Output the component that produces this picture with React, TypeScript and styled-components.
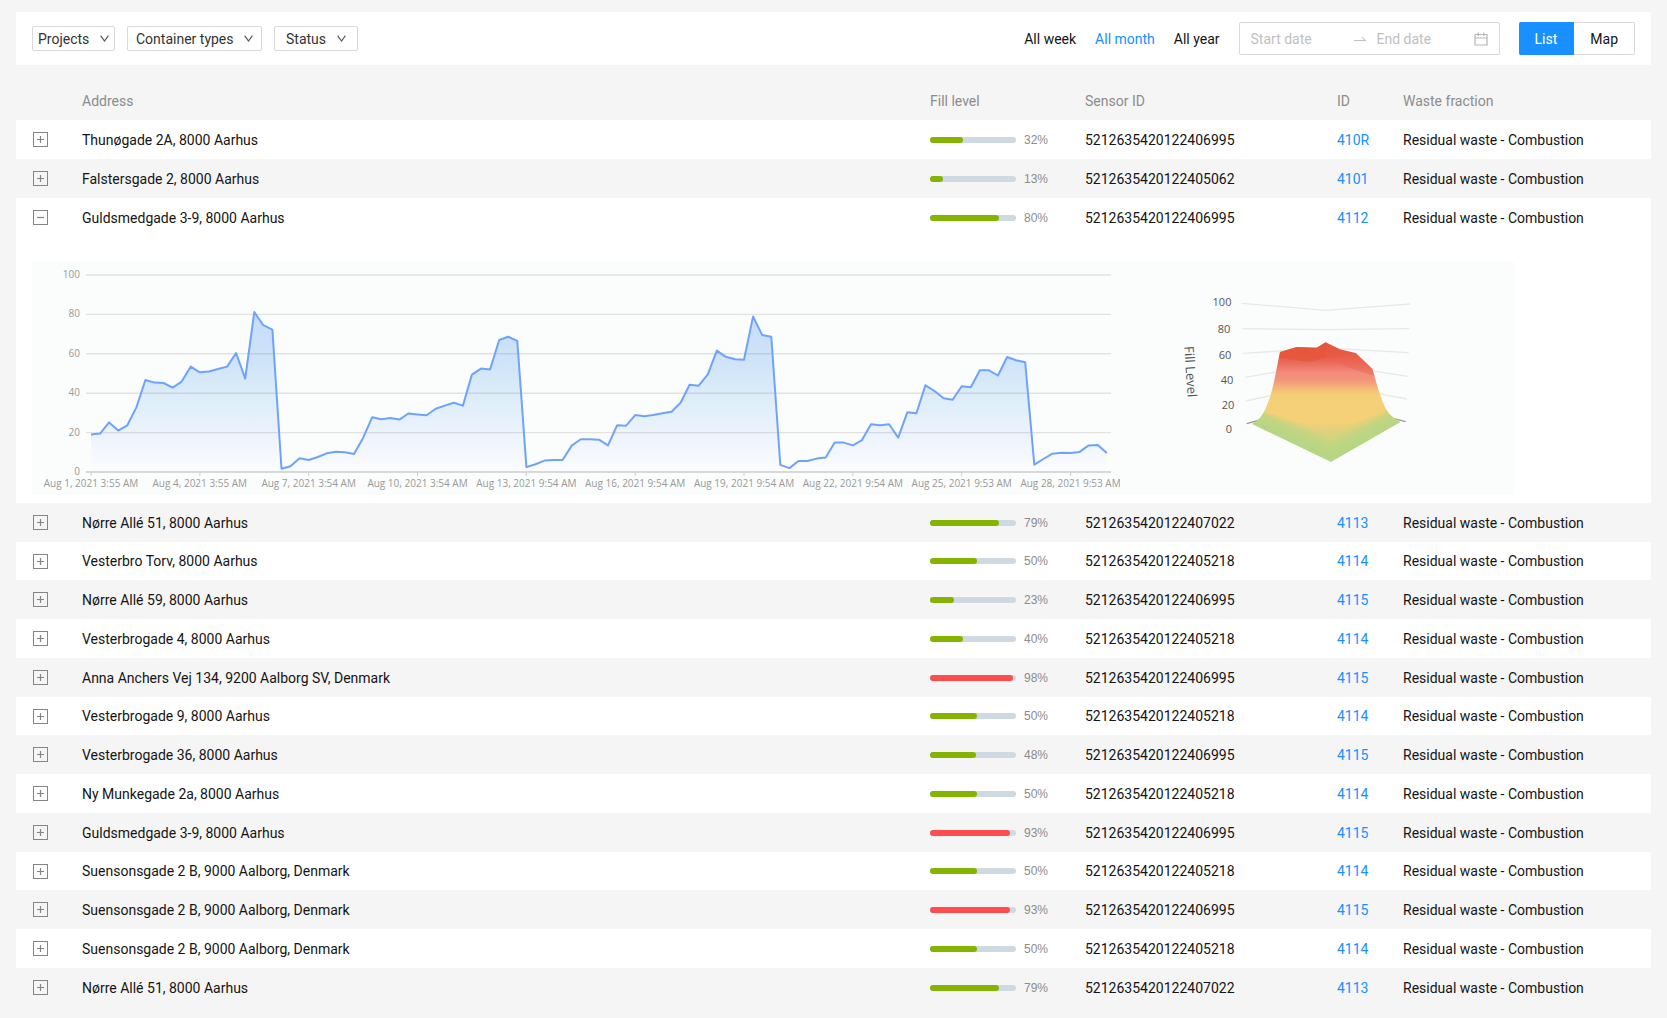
import React, { useState } from "react";
import styled, { createGlobalStyle, css } from "styled-components";

const GlobalStyle = createGlobalStyle`
  *, *::before, *::after { box-sizing: border-box; }
  body {
    margin: 0;
    background: #f5f5f5;
    color: #141414;
    font-family: Roboto, "Liberation Sans", sans-serif;
    font-size: 14px;
    line-height: 20px;
  }
  button, input, select { font: inherit; color: inherit; }
`;

const Page = styled.main`
  min-height: 100vh;
  padding: 12px 16px;
`;

const Toolbar = styled.header`
  display: flex;
  align-items: center;
  justify-content: space-between;
  min-height: 53px;
  padding: 0 16px;
  background: #fff;
`;

const Filters = styled.div`
  display: flex;
  gap: 12px;
`;

const FilterBox = styled.label<{ $pad: number }>`
  display: inline-flex;
  align-items: center;
  gap: 10px;
  height: 25px;
  padding: 0 ${(p) => p.$pad}px;
  border: 1px solid #d9d9d9;
  border-radius: 2px;
  color: #333;
  background: #fff;
  svg { pointer-events: none; }
`;

const FilterSelect = styled.select`
  appearance: none;
  margin: 0;
  padding: 0;
  border: 0;
  outline: 0;
  background: transparent;
  cursor: pointer;
`;

const Controls = styled.div`
  display: flex;
  align-items: center;
  gap: 19px;
`;

const RangeButton = styled.button<{ $active?: boolean }>`
  padding: 0;
  border: 0;
  background: none;
  color: ${(p) => (p.$active ? "#1890ff" : "#141414")};
  cursor: pointer;
`;

const DateRange = styled.div`
  display: flex;
  align-items: center;
  gap: 11px;
  height: 33px;
  padding: 0 11px;
  border: 1px solid #d9d9d9;
  border-radius: 2px;
  background: #fff;
`;

const DateInput = styled.input<{ $w: number }>`
  width: ${(p) => p.$w}px;
  padding: 0;
  border: 0;
  outline: 0;
  background: transparent;
  &::placeholder { color: #bfbfbf; opacity: 1; }
`;

const Segmented = styled.div`
  display: flex;
`;

const SegmentButton = styled.button<{ $active?: boolean }>`
  height: 33px;
  padding: 0 16px;
  border: 1px solid #d9d9d9;
  border-left-width: 0;
  border-radius: 0 2px 2px 0;
  background: #fff;
  color: #141414;
  cursor: pointer;
  ${(p) =>
    p.$active &&
    css`
      border-color: #1890ff;
      border-radius: 2px 0 0 2px;
      background: #1890ff;
      color: #fff;
    `}
`;

const Table = styled.table`
  width: 100%;
  margin-top: 17px;
  border-collapse: collapse;
  table-layout: fixed;
  th, td { padding: 0; text-align: left; }
`;

const Col = styled.col<{ $w?: number }>`
  ${(p) => p.$w && `width: ${p.$w}px;`}
`;

const HeadCell = styled.th`
  height: 38px;
  color: #8c8c8c;
  font-weight: 400;
`;

const Row = styled.tr<{ $striped: boolean; $tight: boolean }>`
  height: ${(p) => (p.$tight ? 38 : 39)}px;
  background: ${(p) => (p.$striped ? "#f5f5f5" : "#fff")};
`;

const DetailRow = styled.tr`
  background: #fff;
`;

const DetailPanel = styled.div`
  display: flex;
  width: fit-content;
  margin: 24px 16px 8px;
  background: #fbfdfc;
  svg { display: block; }
`;

const ExpandButton = styled.button`
  display: block;
  width: 15px;
  height: 15px;
  margin-left: 17px;
  padding: 0;
  border: 0;
  background: none;
  cursor: pointer;
  svg { display: block; }
`;

const Fill = styled.div`
  display: flex;
  align-items: center;
  gap: 8px;
`;

const Track = styled.div`
  width: 86px;
  height: 6px;
  border-radius: 3px;
  background: #cfd9e1;
`;

const Bar = styled.div<{ $alert: boolean }>`
  height: 100%;
  border-radius: 3px;
  background: ${(p) => (p.$alert ? "#ff4d4f" : "#84b400")};
`;

const Percent = styled.span`
  color: #8c8c8c;
  font-family: "Liberation Sans", sans-serif;
  font-size: 12px;
`;

const IdLink = styled.a`
  color: #1890ff;
  text-decoration: none;
`;

const AxisText = styled.text`
  fill: #999;
  font-family: "Open Sans", "Noto Sans", sans-serif;
  font-size: 10px;
`;

const SurfaceText = styled.text<{ $title?: boolean }>`
  fill: #555;
  font-family: "Open Sans", "Noto Sans", sans-serif;
  font-size: ${(p) => (p.$title ? 13 : 11)}px;
  text-anchor: middle;
`;

const Chevron = () => (
  <svg width="9" height="7" viewBox="0 0 9 7" fill="none" stroke="#595959" aria-hidden="true">
    <path d="M0.6 0.6 4.5 6 8.4 0.6" strokeWidth="1.2" />
  </svg>
);

const RangeArrow = () => (
  <svg width="12" height="8" viewBox="0 0 12 8" fill="none" stroke="#bfbfbf" aria-hidden="true">
    <path d="M0 5.5H11.2L8 2" strokeWidth="1.1" />
  </svg>
);

const CalendarIcon = () => (
  <svg width="14" height="14" viewBox="0 0 14 14" fill="none" stroke="#b5b5b5" aria-hidden="true">
    <path d="M1 2.5H13V13H1ZM1 6H13M4.2 0.5V4M9.8 0.5V4" strokeWidth="1.2" />
  </svg>
);

const ExpandIcon = ({ open }: { open: boolean }) => (
  <svg width="15" height="15" viewBox="0 0 15 15" fill="none" stroke="#858585" aria-hidden="true">
    <rect x="0.5" y="0.5" width="14" height="14" />
    <path d={open ? "M4 7.5H11" : "M4 7.5H11M7.5 4V11"} strokeWidth="1.2" />
  </svg>
);

const levels = [
  19, 19.5, 25.2, 21, 23.7, 32.7, 46.7, 45.4, 45.2, 42.8, 45.9, 53.5, 50.6, 51, 52.3, 53.5, 60.4,
  47.4, 81.2, 74.5, 72.3, 1.7, 2.9, 7, 6.1, 7.6, 9.5, 10.3, 10, 9.1, 17.3, 27.8, 26.8, 27.4, 26.6,
  29.7, 29.2, 28.8, 32.1, 33.7, 35.2, 33.7, 49.4, 52.5, 52.1, 67, 68.7, 66.5, 2.5, 3.9, 5.8, 6.1,
  6.1, 13.4, 16.6, 16.6, 16.4, 13.5, 23.7, 23.5, 28.9, 28.3, 28.9, 29.8, 30.6, 35.2, 44.3, 43.8,
  49.6, 61.6, 58.5, 57.2, 57, 79, 69.5, 68.7, 3.6, 2, 5.6, 5.6, 6.8, 7.4, 14.9, 14.9, 13.5, 16.2,
  24.2, 23.7, 24.2, 17.4, 30.3, 29.8, 44, 41.1, 37.4, 36.7, 43.5, 43, 51.6, 51.6, 49, 58.4, 56.7,
  55.7, 3.7, 6.6, 9.3, 9.8, 9.6, 10.2, 13.5, 13.7, 9.6,
];

const dates = [
  "Aug 1, 2021 3:55 AM",
  "Aug 4, 2021 3:55 AM",
  "Aug 7, 2021 3:54 AM",
  "Aug 10, 2021 3:54 AM",
  "Aug 13, 2021 9:54 AM",
  "Aug 16, 2021 9:54 AM",
  "Aug 19, 2021 9:54 AM",
  "Aug 22, 2021 9:54 AM",
  "Aug 25, 2021 9:53 AM",
  "Aug 28, 2021 9:53 AM",
];

const BASE = 211;
const px = (i: number) => 59 + i * 9.07;
const py = (v: number) => BASE - v * 1.97;

function LevelChart() {
  const line = levels.map((v, i) => `${px(i).toFixed(1)},${py(v).toFixed(1)}`).join(" L");
  return (
    <svg width="1088" height="234" role="img" aria-label="Fill level over time">
      <defs>
        <linearGradient id="area" gradientUnits="userSpaceOnUse" x1="0" y1="50" x2="0" y2={BASE}>
          <stop offset="0" stopColor="#c6dcf9" />
          <stop offset="0.3" stopColor="#cfe3f9" />
          <stop offset="0.5" stopColor="#daecf8" />
          <stop offset="0.8" stopColor="#eff4fd" />
          <stop offset="1" stopColor="#fbfcfe" />
        </linearGradient>
      </defs>
      <path d={`M${px(0)},${BASE} L${line} L${px(112)},${BASE} Z`} fill="url(#area)" />
      {[0, 20, 40, 60, 80, 100].map((v) => (
        <g key={v}>
          <line x1="54" x2="1079" y1={py(v)} y2={py(v)} stroke={v ? "#80707030" : "#cccccc"} strokeWidth="1.4" />
          <AxisText x="48" y={py(v) + 3} textAnchor="end">{v}</AxisText>
        </g>
      ))}
      {dates.map((d, i) => (
        <g key={d}>
          <line x1={px(i * 12)} x2={px(i * 12)} y1={BASE} y2={BASE + 4} stroke="#cccccc" />
          <AxisText x={px(i * 12)} y="226" textAnchor="middle">{d}</AxisText>
        </g>
      ))}
      <path d={`M${line}`} fill="none" stroke="#6fa3fb" strokeWidth="2" strokeLinejoin="round" />
    </svg>
  );
}

const surfaceTicks = [
  { v: 100, x: 102, y: 45 },
  { v: 80, x: 104, y: 72 },
  { v: 60, x: 105, y: 98 },
  { v: 40, x: 107, y: 123 },
  { v: 20, x: 108, y: 148 },
  { v: 0, x: 109, y: 172 },
];

function SurfaceChart() {
  return (
    <svg width="394" height="234" role="img" aria-label="Fill level surface">
      <defs>
        <linearGradient id="surface" gradientUnits="userSpaceOnUse" x1="0" y1="218" x2="0" y2="575">
          <stop offset="0" stopColor="#e6553b" />
          <stop offset="0.12" stopColor="#e75c46" />
          <stop offset="0.18" stopColor="#ec6f5e" />
          <stop offset="0.25" stopColor="#f28b7b" />
          <stop offset="0.31" stopColor="#f2937a" />
          <stop offset="0.37" stopColor="#f4b179" />
          <stop offset="0.44" stopColor="#f5cf78" />
          <stop offset="0.66" stopColor="#f5d077" />
          <stop offset="0.8" stopColor="#cfd37f" />
          <stop offset="0.88" stopColor="#b9d583" />
          <stop offset="1" stopColor="#b5d684" />
        </linearGradient>
        <linearGradient id="skirtLeft" gradientUnits="userSpaceOnUse" x1="395" y1="515" x2="428" y2="440">
          <stop offset="0" stopColor="#b5d684" />
          <stop offset="0.45" stopColor="#c2d582" />
          <stop offset="1" stopColor="#f5d077" stopOpacity="0" />
        </linearGradient>
        <linearGradient id="skirtRight" gradientUnits="userSpaceOnUse" x1="617" y1="515" x2="580" y2="440">
          <stop offset="0" stopColor="#b5d684" />
          <stop offset="0.45" stopColor="#c2d582" />
          <stop offset="1" stopColor="#f5d077" stopOpacity="0" />
        </linearGradient>
      </defs>
      <g transform="translate(40 9) scale(0.3333)" fill="none">
        <path
          d="M245 100 496 121 750 102M247 176 500 179 748 176M250 250 496 234 746 248M255 322 496 280 743 319M258 393 496 340 740 387"
          stroke="#e8e8e8"
          strokeWidth="4"
        />
        <path d="M260 461 310 447M690 443 737 455" stroke="#9a9a9a" strokeWidth="4" />
        <path
          d="M360 246 410 231 470 233 497 217 540 238 587 249 637 296C648 330 660 385 680 420Q690 440 721 456L513 575 277 462Q302 447 310 430C330 390 340 350 347 310Z"
          fill="url(#surface)"
        />
        <path d="M277 462Q302 447 312 425L513 490V575Z" fill="url(#skirtLeft)" />
        <path d="M721 456Q690 440 680 420L513 490V575Z" fill="url(#skirtRight)" />
        <path d="M360 246 410 231 470 233 497 217 500 262 450 276 358 264Z" fill="#e6553b" opacity="0.7" />
        <path d="M587 249 637 296 643 318 560 290 520 262Z" fill="#ea6351" opacity="0.5" />
      </g>
      {surfaceTicks.map((t) => (
        <SurfaceText key={t.v} x={t.x} y={t.y}>{t.v}</SurfaceText>
      ))}
      <SurfaceText $title transform="translate(66 111) rotate(86)">Fill Level</SurfaceText>
    </svg>
  );
}

type Container = { address: string; level: number; bar: number; sensor: string; id: string };

const S95 = "5212635420122406995";
const S18 = "5212635420122405218";
const S22 = "5212635420122407022";

const containers: Container[] = [
  { address: "Thunøgade 2A, 8000 Aarhus", level: 32, bar: 38, sensor: S95, id: "410R" },
  { address: "Falstersgade 2, 8000 Aarhus", level: 13, bar: 15, sensor: "5212635420122405062", id: "4101" },
  { address: "Guldsmedgade 3-9, 8000 Aarhus", level: 80, bar: 80, sensor: S95, id: "4112" },
  { address: "Nørre Allé 51, 8000 Aarhus", level: 79, bar: 80, sensor: S22, id: "4113" },
  { address: "Vesterbro Torv, 8000 Aarhus", level: 50, bar: 55, sensor: S18, id: "4114" },
  { address: "Nørre Allé 59, 8000 Aarhus", level: 23, bar: 28, sensor: S95, id: "4115" },
  { address: "Vesterbrogade 4, 8000 Aarhus", level: 40, bar: 38, sensor: S18, id: "4114" },
  { address: "Anna Anchers Vej 134, 9200 Aalborg SV, Denmark", level: 98, bar: 97, sensor: S95, id: "4115" },
  { address: "Vesterbrogade 9, 8000 Aarhus", level: 50, bar: 55, sensor: S18, id: "4114" },
  { address: "Vesterbrogade 36, 8000 Aarhus", level: 48, bar: 53, sensor: S95, id: "4115" },
  { address: "Ny Munkegade 2a, 8000 Aarhus", level: 50, bar: 55, sensor: S18, id: "4114" },
  { address: "Guldsmedgade 3-9, 8000 Aarhus", level: 93, bar: 93, sensor: S95, id: "4115" },
  { address: "Suensonsgade 2 B, 9000 Aalborg, Denmark", level: 50, bar: 55, sensor: S18, id: "4114" },
  { address: "Suensonsgade 2 B, 9000 Aalborg, Denmark", level: 93, bar: 93, sensor: S95, id: "4115" },
  { address: "Suensonsgade 2 B, 9000 Aalborg, Denmark", level: 50, bar: 55, sensor: S18, id: "4114" },
  { address: "Nørre Allé 51, 8000 Aarhus", level: 79, bar: 80, sensor: S22, id: "4113" },
];

const filters = [
  { label: "Projects", pad: 5 },
  { label: "Container types", pad: 8 },
  { label: "Status", pad: 11 },
];

export default function App() {
  const [open, setOpen] = useState<number | null>(2);
  const [range, setRange] = useState("All month");
  const [view, setView] = useState("List");

  return (
    <>
      <GlobalStyle />
      <Page>
        <Toolbar>
          <Filters>
            {filters.map((f) => (
              <FilterBox key={f.label} $pad={f.pad}>
                <FilterSelect aria-label={f.label}>
                  <option>{f.label}</option>
                </FilterSelect>
                <Chevron />
              </FilterBox>
            ))}
          </Filters>
          <Controls>
            {["All week", "All month", "All year"].map((r) => (
              <RangeButton key={r} type="button" $active={r === range} onClick={() => setRange(r)}>
                {r}
              </RangeButton>
            ))}
            <DateRange>
              <DateInput $w={92} aria-label="Start date" placeholder="Start date" />
              <RangeArrow />
              <DateInput $w={86} aria-label="End date" placeholder="End date" />
              <CalendarIcon />
            </DateRange>
            <Segmented>
              {["List", "Map"].map((v) => (
                <SegmentButton key={v} type="button" $active={v === view} onClick={() => setView(v)}>
                  {v}
                </SegmentButton>
              ))}
            </Segmented>
          </Controls>
        </Toolbar>

        <Table>
          <colgroup>
            <Col $w={66} />
            <Col />
            <Col $w={155} />
            <Col $w={252} />
            <Col $w={66} />
            <Col $w={248} />
          </colgroup>
          <thead>
            <tr>
              <HeadCell aria-label="Expand" />
              <HeadCell scope="col">Address</HeadCell>
              <HeadCell scope="col">Fill level</HeadCell>
              <HeadCell scope="col">Sensor ID</HeadCell>
              <HeadCell scope="col">ID</HeadCell>
              <HeadCell scope="col">Waste fraction</HeadCell>
            </tr>
          </thead>
          <tbody>
            {containers.map((c, i) => (
              <React.Fragment key={i}>
                <Row $striped={i % 2 === 1} $tight={i % 4 === 0 && i > 0}>
                  <td>
                    <ExpandButton
                      type="button"
                      aria-label={open === i ? "Collapse row" : "Expand row"}
                      aria-expanded={open === i}
                      onClick={() => setOpen(open === i ? null : i)}
                    >
                      <ExpandIcon open={open === i} />
                    </ExpandButton>
                  </td>
                  <td>{c.address}</td>
                  <td>
                    <Fill>
                      <Track>
                        <Bar $alert={c.level > 90} style={{ width: `${c.bar}%` }} />
                      </Track>
                      <Percent>{c.level}%</Percent>
                    </Fill>
                  </td>
                  <td>{c.sensor}</td>
                  <td>
                    <IdLink href={`#${c.id}`}>{c.id}</IdLink>
                  </td>
                  <td>Residual waste - Combustion</td>
                </Row>
                {open === i && (
                  <DetailRow>
                    <td colSpan={6}>
                      <DetailPanel>
                        <LevelChart />
                        <SurfaceChart />
                      </DetailPanel>
                    </td>
                  </DetailRow>
                )}
              </React.Fragment>
            ))}
          </tbody>
        </Table>
      </Page>
    </>
  );
}
